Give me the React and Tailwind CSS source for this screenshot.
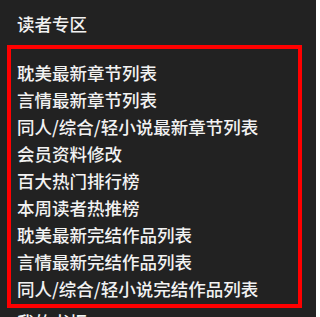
export default function App() {
  const items = [
    "耽美最新章节列表",
    "言情最新章节列表",
    "同人/综合/轻小说最新章节列表",
    "会员资料修改",
    "百大热门排行榜",
    "本周读者热推榜",
    "耽美最新完结作品列表",
    "言情最新完结作品列表",
    "同人/综合/轻小说完结作品列表",
  ];
  return (
    <div
      className="h-[317px] w-[316px] overflow-hidden bg-[#222222] text-[#f2f2f2] font-medium"
      style={{ fontFamily: '"Noto Sans CJK SC", "Noto Sans", sans-serif' }}
    >
      <div className="pl-[17px] pt-[10px] text-[17.5px] leading-[27px]">读者专区</div>
      <div className="ml-[7px] mt-[8px] w-[295px] border-4 border-[#ff0000] pl-[6px] pt-[10px] pb-[2px]">
        {items.map((t) => (
          <div key={t} className="text-[17.5px] leading-[27px] whitespace-nowrap">
            {t}
          </div>
        ))}
      </div>
      <div className="pl-[17px] text-[17.5px] leading-[27px]">我的书柜</div>
    </div>
  );
}
